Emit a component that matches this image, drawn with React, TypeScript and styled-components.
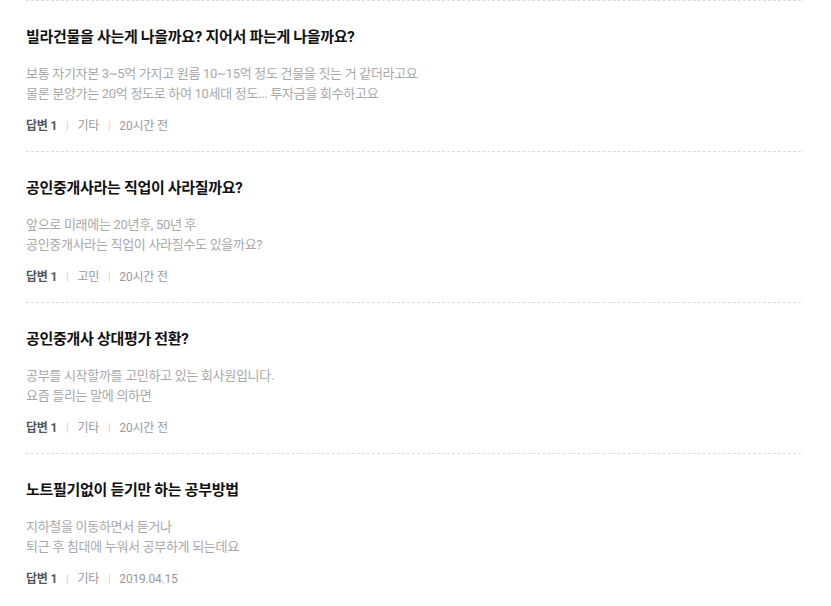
import React from "react";
import styled, { createGlobalStyle } from "styled-components";

const Global = createGlobalStyle`
  html, body { margin: 0; padding: 0; background: #fff; }
  body { font-family: Roboto, "Noto Sans CJK KR", sans-serif; -webkit-font-smoothing: antialiased; }
`;

const List = styled.ul`
  list-style: none;
  margin: 0;
  padding: 0 30px 0 26px;
  width: 775px;
`;

const Item = styled.li`
  border-top: 1px dashed #dcdcdc;
  padding: 25px 0 16px;
`;

const Title = styled.h3`
  margin: 0;
  font-size: 15px;
  line-height: 22px;
  font-weight: 700;
  color: #111;
  letter-spacing: -0.3px;
`;

const Body = styled.p`
  margin: 16px 0 0;
  font-size: 13px;
  line-height: 20px;
  color: #a8a8a8;
  letter-spacing: -0.3px;
`;

const Meta = styled.div`
  margin-top: 13px;
  display: flex;
  align-items: center;
  font-size: 12px;
  line-height: 18px;
  color: #999;
  letter-spacing: -0.2px;
`;

const Answer = styled.span`
  font-weight: 700;
  color: #555;
`;

const Sep = styled.span`
  color: #ccc;
  font-size: 10px;
  margin: 0 9px;
`;

const items = [
  {
    title: "빌라건물을 사는게 나을까요? 지어서 파는게 나을까요?",
    body: ["보통 자기자본 3~5억 가지고 원룸 10~15억 정도 건물을 짓는 거 같더라고요", "물론 분양가는 20억 정도로 하여 10세대 정도... 투자금을 회수하고요"],
    cat: "기타",
    time: "20시간 전",
  },
  {
    title: "공인중개사라는 직업이 사라질까요?",
    body: ["앞으로 미래에는 20년후, 50년 후", "공인중개사라는 직업이 사라질수도 있을까요?"],
    cat: "고민",
    time: "20시간 전",
  },
  {
    title: "공인중개사 상대평가 전환?",
    body: ["공부를 시작할까를 고민하고 있는 회사원입니다.", "요즘 들리는 말에 의하면"],
    cat: "기타",
    time: "20시간 전",
  },
  {
    title: "노트필기없이 듣기만 하는 공부방법",
    body: ["지하철을 이동하면서 듣거나", "퇴근 후 침대에 누워서 공부하게 되는데요"],
    cat: "기타",
    time: "2019.04.15",
  },
];

export default function App() {
  return (
    <>
      <Global />
      <List>
        {items.map((it, i) => (
          <Item key={i}>
            <Title>{it.title}</Title>
            <Body>
              {it.body[0]}
              <br />
              {it.body[1]}
            </Body>
            <Meta>
              <Answer>답변 1</Answer>
              <Sep>|</Sep>
              <span>{it.cat}</span>
              <Sep>|</Sep>
              <span>{it.time}</span>
            </Meta>
          </Item>
        ))}
      </List>
    </>
  );
}
